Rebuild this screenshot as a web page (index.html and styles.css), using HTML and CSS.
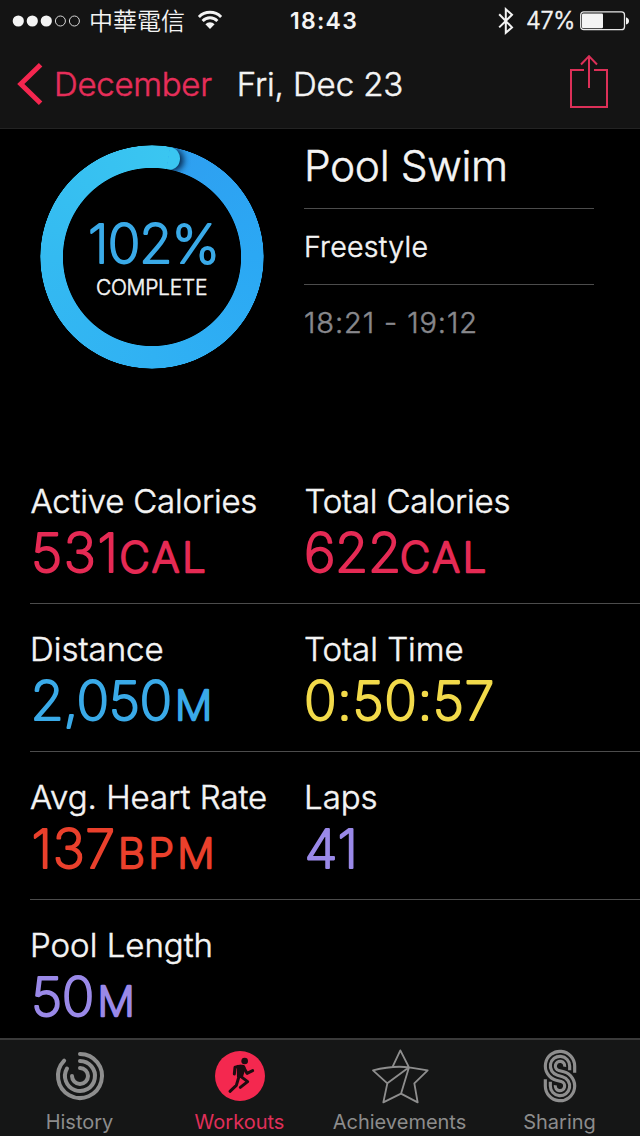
FILE: index.html
```html
<!DOCTYPE html>
<html lang="en">
<head>
<meta charset="utf-8">
<title>Pool Swim</title>
<link rel="stylesheet" href="styles.css">
</head>
<body>
<header class="top">
  <div class="status">
    <div class="status-left">
      <svg class="signal" width="70" height="14" viewBox="0 0 70 14">
        <circle cx="6.3" cy="7" r="5.6"/><circle cx="20.3" cy="7" r="5.6"/><circle cx="34.3" cy="7" r="5.6"/>
        <circle class="off" cx="48.4" cy="7" r="5"/><circle class="off" cx="62.4" cy="7" r="5"/>
      </svg>
      <span class="carrier">中華電信</span>
      <svg class="wifi" width="26" height="20" viewBox="0 0 26 20">
        <path d="M1.9 6.9a15.6 15.6 0 0 1 22.2 0M5.6 10.9a10.4 10.4 0 0 1 14.8 0"/>
        <path class="solid" d="M8.4 14.2a6.5 6.5 0 0 1 9.2 0L13 19z"/>
      </svg>
    </div>
    <div class="clock">18:43</div>
    <div class="status-right">
      <svg class="bt" width="16" height="28" viewBox="0 0 16 28">
        <path d="M1.2 7.2 14 20.4 7.8 25.8V2.2L14 7.8 1.2 20.4"/>
      </svg>
      <span class="percent">47%</span>
      <svg class="battery" width="50" height="20" viewBox="0 0 50 20">
        <rect class="case" x=".7" y=".9" width="43.8" height="17.8" rx="3"/>
        <rect x="2" y="2.4" width="21" height="14.8" rx="1.2"/>
        <path d="M46 6.2c2 .8 3 2 3 3.7s-1 2.900-3 3.700z"/>
      </svg>
    </div>
  </div>
  <nav class="nav">
    <a class="back">
      <svg width="28" height="44" viewBox="0 0 28 44"><path d="M24.600 2.800 4.800 22l19.800 19.200"/></svg>
      <span>December</span>
    </a>
    <span class="date">Fri, Dec 23</span>
    <svg class="share" width="40" height="56" viewBox="0 0 40 56">
      <path d="M15 16H2v37h36V16H25M20 34V2.500M12 10.500l8-8.400 8 8.400"/>
    </svg>
  </nav>
</header>

<main>
  <section class="hero">
    <div class="ring-box">
      <div class="ring"><div class="ring-cap"></div></div>
      <div class="ring-text">
        <svg class="value blue" width="150" height="60"><text class="digits pct" x="11" y="51">102%</text></svg>
        <div class="complete">COMPLETE</div>
      </div>
    </div>
    <div class="info">
      <h1>Pool Swim</h1>
      <div class="stroke-type">Freestyle</div>
      <div class="period">18:21 - 19:12</div>
    </div>
  </section>

  <section class="row">
    <div class="cell"><div class="label cal">Active Calories</div>
      <svg class="value red" width="260" height="60"><text class="digits d531" x="1" y="50.500">531</text><text class="unit" x="89.500" y="50.500">CAL</text></svg></div>
    <div class="cell"><div class="label cal">Total Calories</div>
      <svg class="value red" width="260" height="60"><text class="digits" x="0" y="50.500">622</text><text class="unit" x="96" y="50.500">CAL</text></svg></div>
  </section>
  <section class="row">
    <div class="cell"><div class="label">Distance</div>
      <svg class="value blue" width="260" height="60"><text class="digits" x="0.500" y="50.500">2,050</text><text class="unit" x="145" y="50.500">M</text></svg></div>
    <div class="cell"><div class="label">Total Time</div>
      <svg class="value yellow" width="260" height="60"><text class="digits time" x="0" y="50.500">0:50:57</text></svg></div>
  </section>
  <section class="row">
    <div class="cell"><div class="label">Avg. Heart Rate</div>
      <svg class="value orange" width="260" height="60"><text class="digits d137" x="1.500" y="50.500">137</text><text class="unit bpm" x="88" y="50.500">BPM</text></svg></div>
    <div class="cell"><div class="label">Laps</div>
      <svg class="value purple" width="260" height="60"><text class="digits d137" x="0.500" y="50.500">41</text></svg></div>
  </section>
  <section class="row">
    <div class="cell"><div class="label">Pool Length</div>
      <svg class="value purple" width="260" height="60"><text class="digits" x="1" y="50.500">50</text><text class="unit" x="67.500" y="50.500">M</text></svg></div>
  </section>
</main>

<footer class="tabs">
  <a class="tab">
    <svg width="60" height="56" viewBox="150 54 180 168">
      <path class="history" d="M240 72A66 66 0 1 1 192.500 92.200M240 93A45 45 0 1 1 201 115.500M240 114A24 24 0 1 1 216 138"/>
    </svg>
    <span>History</span>
  </a>
  <a class="tab active">
    <svg width="60" height="56" viewBox="150 54 180 168">
      <circle class="disc" cx="240" cy="138" r="75"/>
      <circle class="runner-head" cx="254" cy="93" r="10"/>
      <path class="runner-torso" d="M230 105l16-1c8 0 12 6 10 12l-8 28-17-3z"/>
      <path class="runner" d="M242 109l-17 3-2 20M250 110l11 20 17-8M237 139l-8 27-19 18M243 140l20 15-22 17"/>
    </svg>
    <span>Workouts</span>
  </a>
  <a class="tab">
    <svg width="60" height="56" viewBox="150 54 180 168">
      <path class="star" d="M218 110 241 61 267 112M159 121Q218 106 267 112L323 121 283 160 293 217 243 191 190 217 202 160ZM202 160 267 112 243 191"/>
    </svg>
    <span>Achievements</span>
  </a>
  <a class="tab">
    <svg width="60" height="56" viewBox="150 54 180 168">
      <path class="sharing" d="M284 128V108A44 44 0 1 0 228.700 150.500L243.600 154.500A14 14 0 1 1 226 166M269 121V108A29 29 0 1 0 232.600 136L247.400 140A29 29 0 1 1 211 168V155M254 110A14 14 0 1 0 236.400 121.500L251.300 125.500A44 44 0 1 1 196 168V148"/>
    </svg>
    <span>Sharing</span>
  </a>
</footer>
</body>
</html>
```
FILE: styles.css
```css
* { box-sizing: border-box; }
body {
  margin: 0;
  width: 640px;
  height: 1136px;
  display: flex;
  flex-direction: column;
  overflow: hidden;
  background: #000;
  color: #f4f4f4;
  font-family: Inter, "Liberation Sans", "Noto Sans CJK TC", sans-serif;
  font-weight: 300;
}
svg { display: block; flex: none; }
main { flex: 1; min-height: 0; overflow: hidden; }
.nav span, h1, .stroke-type, .period, .label, .complete, .percent { -webkit-text-stroke: .5px currentColor; }

.top { height: 129px; background: #141414; border-bottom: 1px solid #232323; }
.status { display: grid; grid-template-columns: 1fr auto 1fr; align-items: center; height: 41px; padding: 0 12px; }
.status-left, .status-right { display: flex; align-items: center; }
.status-right { justify-content: flex-end; }
.signal { fill: #f4f4f4; }
.signal .off { fill: none; stroke: #d8d8d8; stroke-width: 1; }
.carrier { margin: -2px 0 0 7px; font: 350 24px/40px "Noto Sans CJK TC", sans-serif; }
.wifi { margin: -1px 0 0 12px; fill: none; stroke: #f4f4f4; stroke-width: 2.9; }
.wifi .solid { fill: #f4f4f4; stroke: none; }
.clock { padding-left: 8px; font-size: 23px; font-weight: 600; letter-spacing: 1.3px; }
.bt { fill: none; stroke: #f4f4f4; stroke-width: 2; }
.percent { margin-left: 12px; font-size: 23.5px; letter-spacing: -.3px; }
.battery { margin: 0 -2px 0 5px; fill: #f4f4f4; }
.battery .case { fill: none; stroke: #e8e8e8; stroke-width: 1.3; }

.nav { display: flex; align-items: center; height: 88px; margin-top: -1px; padding: 0 31px 0 16px; font-size: 33px; line-height: 40px; }
.back { display: flex; align-items: center; gap: 10px; color: #e62e5a; letter-spacing: -.3px; }
.back svg { fill: none; stroke: #f4264f; stroke-width: 5; }
.date { margin-left: 25px; letter-spacing: -.1px; }
.share { margin: -5px 0 0 auto; fill: none; stroke: #dc3058; stroke-width: 2; }

.hero { display: flex; height: 327px; }
.ring-box { position: relative; width: 224px; height: 224px; margin: 16px 40px 0; }
.ring {
  position: relative;
  width: 224px;
  height: 224px;
  border-radius: 50%;
  background: conic-gradient(from 9.3deg, #2f9ff0, #2ba8f4 80deg, #30b1f3 170deg, #34baf1 260deg, #3ac6f1);
  -webkit-mask: radial-gradient(circle, transparent 88.700px, #000 89.500px, #000 111.300px, transparent 112px);
  mask: radial-gradient(circle, transparent 88.700px, #000 89.500px, #000 111.300px, transparent 112px);
}
.ring-cap {
  position: absolute;
  left: 116.500px;
  top: 1.500px;
  width: 22.500px;
  height: 22.500px;
  border-radius: 50%;
  background: #3ac6f1;
  box-shadow: 4px 1px 6px rgba(0, 20, 50, .85);
  clip-path: inset(-12px -24px -12px 11px);
  transform: rotate(9.3deg);
}
.ring-text { position: absolute; inset: 67px 0 0 37px; }
.complete { margin: 3px 0 0 19px; font-size: 21px; line-height: 26px; letter-spacing: -.3px; }

.info { width: 290px; }
h1 { height: 80px; margin: 0; padding-top: 12px; border-bottom: 1px solid #4c4c4c; font-size: 42.500px; font-weight: 300; line-height: 50px; letter-spacing: -.4px; }
.stroke-type { height: 76px; border-bottom: 1px solid #4c4c4c; font-size: 28.500px; line-height: 75px; letter-spacing: .3px; }
.period { color: #88888c; font-size: 29px; line-height: 75px; letter-spacing: .9px; }

.row { display: grid; grid-template-columns: 274px 1fr; height: 148px; margin-left: 30px; padding-top: 25px; border-bottom: 1px solid #4c4c4c; }
.label { font-size: 33px; line-height: 40px; white-space: nowrap; }
.label.cal { letter-spacing: -.2px; padding-left: .5px; }
.value { overflow: visible; fill: currentColor; stroke: currentColor; stroke-width: 2.200px; stroke-linejoin: round; stroke-linecap: round; }
.digits { font-size: 54px; font-weight: 200; letter-spacing: -.4px; }
.digits.d531 { letter-spacing: 1.600px; }
.digits.d137 { letter-spacing: .6px; }
.digits.time { letter-spacing: .5px; }
.digits.pct { letter-spacing: -.9px; }
.unit { font-size: 41.500px; font-weight: 200; letter-spacing: 3px; stroke-width: 2.500px; }
.unit.bpm { letter-spacing: 3.500px; }
.red { color: #e52a54; }
.blue { color: #3aaae8; }
.yellow { color: #f2da4a; }
.orange { color: #ea402c; }
.purple { color: #9a89e8; }

.tabs { display: flex; height: 98px; border-top: 2px solid #3a3a3a; background: #151616; padding-top: 8px; }
.tab { flex: 1; display: flex; flex-direction: column; align-items: center; gap: 6px; color: #8c8c8c; font-size: 20px; font-weight: 400; line-height: 24px; }
.tab span { margin-left: -1px; }
.tab svg { fill: none; stroke: #8e8e8e; stroke-linecap: round; stroke-linejoin: round; }
.tab.active { color: #e02f5a; }
.history { stroke-width: 12; }
.tab .disc { fill: #f4284f; stroke: none; }
.runner-head, .runner-torso { fill: #1c0c10; stroke: none; }
.runner { stroke: #1c0c10; stroke-width: 9; }
.star { stroke-width: 5.500; }
.sharing { stroke-width: 9.500; stroke-linecap: butt; }
```
